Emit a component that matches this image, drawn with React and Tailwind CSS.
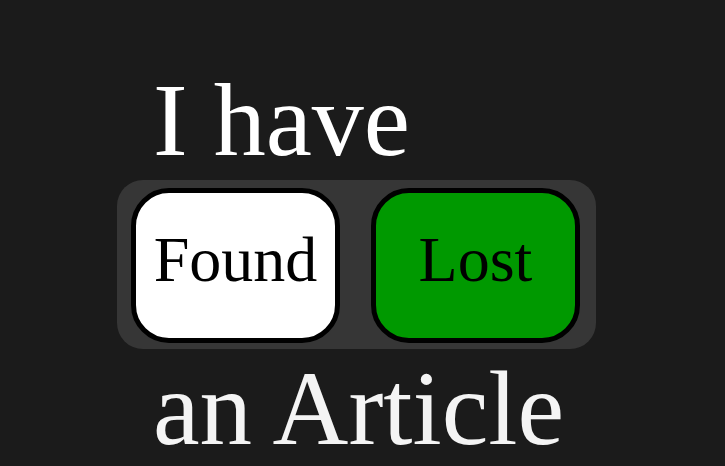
export default function App() {
  return (
    <div className="h-screen w-full overflow-hidden bg-[#1b1b1b] font-['Liberation_Serif',serif]">
      <div className="flex flex-col pt-[68px]">
        <h1 className="pl-[153px] text-[104px] leading-[104px] font-normal text-white">I have</h1>
        <div className="mt-[8px] ml-[117px] flex h-[169px] w-[479px] items-start gap-[31px] rounded-[26px] bg-[#363636] pt-[8px] pl-[14px]">
          <button className="flex h-[155px] w-[209px] items-center justify-center rounded-[38px] border-[5px] border-black bg-white pb-[12px] text-[64px] leading-none text-black">
            Found
          </button>
          <button className="flex h-[155px] w-[209px] items-center justify-center rounded-[38px] border-[5px] border-black bg-[#009900] pb-[12px] text-[64px] leading-none text-black">
            Lost
          </button>
        </div>
        <h2 className="mt-[8px] pl-[153px] text-[105px] leading-[104px] font-normal whitespace-nowrap text-[#f4f4f4]">an Article</h2>
      </div>
    </div>
  );
}
